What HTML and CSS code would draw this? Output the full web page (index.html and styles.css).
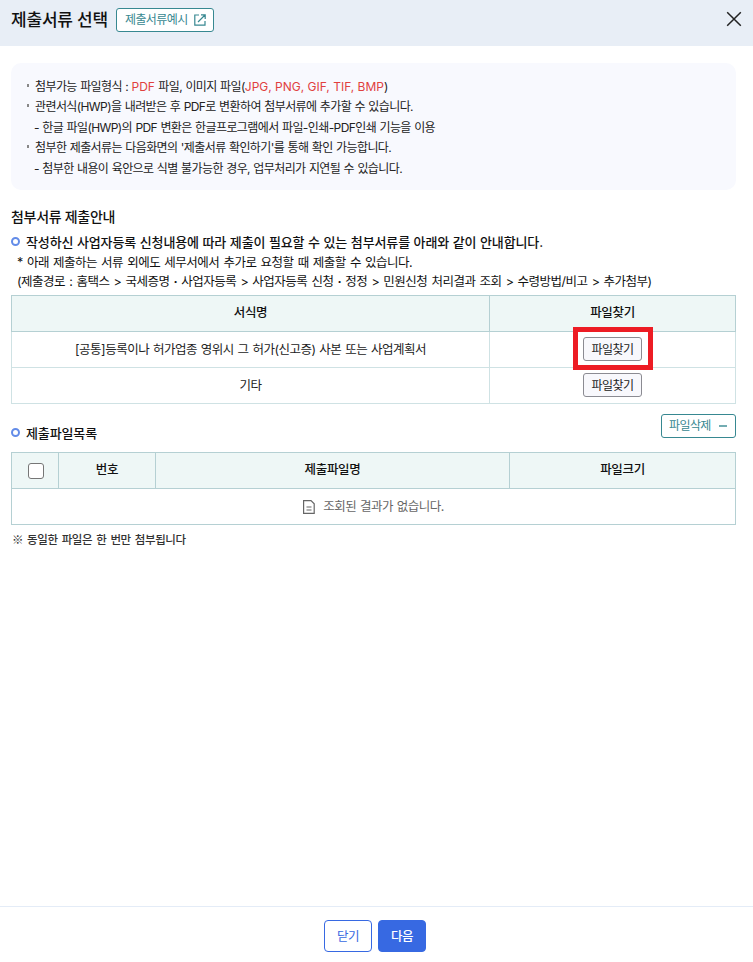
FILE: index.html
```html
<!DOCTYPE html>
<html lang="ko">
  <head>
    <meta charset="UTF-8" />
    <meta name="viewport" content="width=device-width, initial-scale=1.0" />
    <title>제출서류 선택</title>
    <link rel="stylesheet" href="styles.css">
  </head>
  <body>
    <div class="popup">
      <header class="popup-header">
        <h1>제출서류 선택</h1>
        <button class="btn-line btn-example">
          <span>제출서류예시</span>
          <svg width="12" height="12" viewBox="0 0 12 12" fill="none" stroke="currentColor" stroke-width="1.2">
            <path d="M5 1H.8v10.2H11V7M7 .8h4.2V5M11 1 4 8" />
          </svg>
        </button>
        <button class="btn-close" aria-label="닫기">
          <svg width="16" height="16" viewBox="0 0 16 16" fill="none" stroke="currentColor" stroke-width="1.5">
            <path d="M1.2 1.2l13.6 13.6M14.8 1.2L1.2 14.8" />
          </svg>
        </button>
      </header>

      <main class="popup-content">
        <ul class="info-box">
          <li>첨부가능 파일형식 : <em>PDF</em> 파일, 이미지 파일(<em>JPG, PNG, GIF, TIF, BMP</em>)</li>
          <li>관련서식(HWP)을 내려받은 후 PDF로 변환하여 첨부서류에 추가할 수 있습니다.</li>
          <li class="sub">- 한글 파일(HWP)의 PDF 변환은 한글프로그램에서 파일-인쇄-PDF인쇄 기능을 이용</li>
          <li>첨부한 제출서류는 다음화면의 '제출서류 확인하기'를 통해 확인 가능합니다.</li>
          <li class="sub">- 첨부한 내용이 육안으로 식별 불가능한 경우, 업무처리가 지연될 수 있습니다.</li>
        </ul>

        <h2>첨부서류 제출안내</h2>
        <h3 class="guide-title">작성하신 사업자등록 신청내용에 따라 제출이 필요할 수 있는 첨부서류를 아래와 같이 안내합니다.</h3>
        <p class="guide">* 아래 제출하는 서류 외에도 세무서에서 추가로 요청할 때 제출할 수 있습니다.</p>
        <p class="guide path">(제출경로 : 홈택스 &gt; 국세증명 <b>·</b> 사업자등록 &gt; 사업자등록 신청 <b>·</b> 정정 &gt; 민원신청 처리결과 조회 &gt; 수령방법/비고 &gt; 추가첨부)</p>

        <table class="form-table">
          <colgroup>
            <col class="col-form">
            <col>
          </colgroup>
          <thead>
            <tr><th>서식명</th><th>파일찾기</th></tr>
          </thead>
          <tbody>
            <tr>
              <td>[공통]등록이나 허가업종 영위시 그 허가(신고증) 사본 또는 사업계획서</td>
              <td><span class="marked"><button class="btn-find">파일찾기</button></span></td>
            </tr>
            <tr>
              <td>기타</td>
              <td><button class="btn-find">파일찾기</button></td>
            </tr>
          </tbody>
        </table>

        <div class="list-head">
          <h3>제출파일목록</h3>
          <button class="btn-line btn-delete">
            <span>파일삭제</span>
            <svg width="8" height="8" viewBox="0 0 8 8" stroke="currentColor" stroke-width="1.4"><path d="M0 4h8" /></svg>
          </button>
        </div>

        <table class="file-table">
          <colgroup>
            <col class="col-check">
            <col class="col-no">
            <col class="col-name">
            <col>
          </colgroup>
          <thead>
            <tr>
              <th><input type="checkbox" aria-label="전체선택"></th>
              <th>번호</th>
              <th>제출파일명</th>
              <th>파일크기</th>
            </tr>
          </thead>
          <tbody>
            <tr>
              <td colspan="4">
                <div class="empty">
                  <svg width="12" height="14" viewBox="0 0 12 14" fill="none" stroke="currentColor" stroke-width="1.2">
                    <path d="M.6.6h7.4l3.2 3.2v9.6H.6zM3.5 7h5M3.5 10h5" />
                  </svg>
                  <span>조회된 결과가 없습니다.</span>
                </div>
              </td>
            </tr>
          </tbody>
        </table>
        <p class="notice">※ 동일한 파일은 한 번만 첨부됩니다</p>
      </main>

      <footer class="popup-footer">
        <button class="btn">닫기</button>
        <button class="btn primary">다음</button>
      </footer>
    </div>
  </body>
</html>
```
FILE: styles.css
```css
*,
*::before,
*::after {
  box-sizing: border-box;
}

body {
  margin: 0;
  background: #fff;
  color: #222;
  font-family: Inter, "Noto Sans CJK KR", sans-serif;
  font-size: 12px;
  letter-spacing: -0.6px;
}

h1, h2, h3, p, ul {
  margin: 0;
  padding: 0;
}

button {
  padding: 0;
  font: inherit;
  letter-spacing: inherit;
  cursor: pointer;
}

svg {
  display: block;
  flex: none;
}

.popup {
  display: flex;
  flex-direction: column;
  height: 962px;
}

/* header */
.popup-header {
  display: flex;
  align-items: center;
  height: 46px;
  padding: 0 11px 6px;
  background: #e8eef6;
}

h1 {
  color: #111;
  font-size: 17px;
  font-weight: 500;
  line-height: 24px;
  letter-spacing: -0.2px;
}

.btn-line {
  display: flex;
  align-items: center;
  justify-content: space-between;
  height: 24px;
  padding: 0 8px;
  border: 1px solid #378891;
  border-radius: 3px;
  background: #fff;
  color: #378891;
  line-height: 20px;
}

.btn-example {
  width: 98px;
  margin-left: 8px;
  padding-right: 7px;
}

.btn-close {
  margin-top: -2px;
  margin-left: auto;
  border: 0;
  background: none;
  color: #222;
}

/* content */
.popup-content {
  flex: 1;
  padding: 17px 17px 0 11px;
}

.info-box {
  height: 127px;
  padding: 14px 15px;
  border-radius: 10px;
  background: #f8f9fe;
  list-style: none;
}

.info-box li {
  display: flex;
  white-space: pre;
  line-height: 20.4px;
  word-spacing: 0.6px;
}

.info-box li::before {
  content: "";
  width: 2px;
  height: 3px;
  margin: 7px 6px 0 1px;
  background: #888;
}

.info-box .sub::before {
  width: 1px;
  background: none;
}

.info-box em {
  color: #e0403f;
  font-style: normal;
  letter-spacing: 0;
  word-spacing: 0;
}

h2 {
  margin-top: 16px;
  color: #111;
  font-size: 14px;
  font-weight: 500;
  line-height: 22px;
  letter-spacing: -0.3px;
}

h3 {
  display: flex;
  align-items: center;
  color: #111;
  font-size: 13px;
  font-weight: 500;
  line-height: 20px;
  letter-spacing: -0.13px;
  word-spacing: 0.3px;
  white-space: nowrap;
}

h3::before {
  content: "";
  width: 9px;
  height: 9px;
  margin: 0 6px 2px 0;
  border: 2px solid #638ce8;
  border-radius: 50%;
}

.guide-title {
  margin-top: 4px;
}

.guide {
  padding-left: 6px;
  color: #111;
  font-size: 12.5px;
  line-height: 21px;
  letter-spacing: -0.5px;
  word-spacing: 1.1px;
  white-space: nowrap;
}

.path {
  line-height: 18px;
}

table {
  width: 725px;
  border: 1px solid #b5d0d3;
  border-collapse: collapse;
  table-layout: fixed;
}

th,
td {
  height: 36px;
  padding: 0;
  border: 1px solid #b5d0d3;
  font-size: 12.5px;
  text-align: center;
  line-height: 18px;
  letter-spacing: -0.5px;
  word-spacing: 0.8px;
}

th {
  padding-bottom: 2px;
  background: #eef7f6;
  color: #111;
  font-weight: 500;
  letter-spacing: -0.35px;
}

.form-table {
  margin-top: 4px;
}

.form-table td {
  border-color: #cfe2e4;
}

.form-table tbody tr:first-child td {
  border-top-color: #b5d0d3;
}

.form-table td:last-child {
  padding-bottom: 1px;
}

.col-form {
  width: 478px;
}

.col-check {
  width: 47px;
}

.col-no {
  width: 97px;
}

.col-name {
  width: 354px;
}

.btn-find {
  display: block;
  width: 59px;
  height: 24px;
  margin: 0 auto;
  padding-top: 1px;
  border: 1px solid #8b8b92;
  border-radius: 3px;
  background: #f8f8fc;
  color: #222;
  font-size: 12px;
  line-height: 20px;
  letter-spacing: -0.6px;
}

.marked {
  display: block;
  position: relative;
  width: 59px;
  margin: 0 auto;
}

/* highlight frame over the button */
.marked::after {
  content: "";
  position: absolute;
  inset: -10px -11px -9px -10px;
  border: 5px solid #ed1c24;
  pointer-events: none;
}

.list-head {
  display: flex;
  justify-content: space-between;
  height: 48px;
  padding-top: 10px;
}

.list-head h3 {
  height: 20px;
  margin-top: 9px;
}

.btn-delete {
  width: 75px;
  padding-left: 7px;
}

input[type="checkbox"] {
  display: block;
  width: 16px;
  height: 16px;
  margin: 2px auto 0 16px;
  appearance: none;
  border: 1px solid #767676;
  border-radius: 3px;
  background: #fff;
}

.empty {
  display: flex;
  align-items: center;
  justify-content: center;
  gap: 8px;
  color: #666;
}

.notice {
  margin-top: 4px;
  padding-left: 1px;
  color: #333;
  font-family: "Noto Sans CJK KR", sans-serif;
  font-size: 11.5px;
  font-weight: 500;
  line-height: 20px;
  letter-spacing: -0.4px;
  word-spacing: 1.2px;
}

/* footer */
.popup-footer {
  display: flex;
  justify-content: center;
  gap: 6px;
  height: 56px;
  padding: 13px 3px 0 0;
  border-top: 1px solid #e4ecf7;
}

.btn {
  width: 48px;
  height: 32px;
  padding-bottom: 1px;
  border: 1px solid #3769e2;
  border-radius: 4px;
  background: #fff;
  color: #3769e2;
  font-size: 12.5px;
}

.primary {
  background: #3769e2;
  color: #fff;
  font-weight: 500;
}
```
